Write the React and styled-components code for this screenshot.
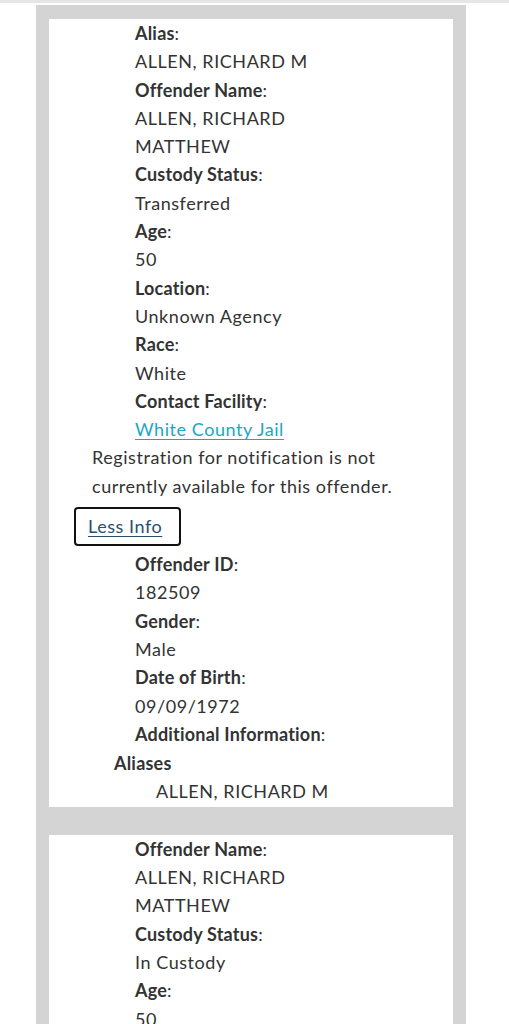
import React from 'react';
import styled, { createGlobalStyle } from 'styled-components';

const GlobalStyle = createGlobalStyle`
    html, body {
        margin: 0;
        padding: 0;
        background: #ffffff;
    }
    body {
        font-family: "Lato", "Open Sans", sans-serif;
        color: #333333;
    }
`

const TopRule = styled.div`
    height: 3px;
    background-color: #e6e6e6;
    margin-bottom: 2px;
`

const Results = styled.div`
    margin-left: 36px;
    width: 430px;
    background-color: #d4d4d4;
    box-sizing: border-box;
    padding: 14px 13px 0;
    display: flex;
    flex-direction: column;
    gap: 28px;
`

const Card = styled.div`
    background-color: #ffffff;
    padding-bottom: ${props => props.$bottom || 0}px;
    font-size: 18px;
    line-height: 28.3px;
    letter-spacing: 0.55px;
`

const Field = styled.div`
    padding-left: 86px;
`

const Label = styled.div`
    b {
        font-weight: 700;
        letter-spacing: 0.2px;
    }
`

const Value = styled.div``

const FacilityLink = styled.a`
    color: #1aa7c2;
    text-decoration: underline;
    text-underline-offset: 3px;
`

const Notice = styled.p`
    margin: 0;
    padding-left: 43px;
    padding-right: 20px;
`

const LessInfo = styled.div`
    margin: 7px 0 4px 25px;
    width: 107px;
    height: 39px;
    box-sizing: border-box;
    border: 2.5px solid #111111;
    border-radius: 4px;
    display: flex;
    align-items: center;
    padding-left: 12px;

    a {
        color: #2b4f6e;
        text-decoration: underline;
        text-underline-offset: 3px;
    }
`

const AliasHeading = styled.div`
    padding-left: 65px;
    font-weight: 700;
    letter-spacing: 0.2px;
    margin-top: 1px;
`

const AliasValue = styled.div`
    padding-left: 107px;
`

function InfoField({ label, children }) {
    return (
        <Field>
            <Label><b>{label}</b>:</Label>
            {children && <Value>{children}</Value>}
        </Field>
    )
}

export default function App() {
    return (
        <>
            <GlobalStyle />
            <TopRule />
            <Results>
                <Card $bottom={1}>
                    <InfoField label="Alias">ALLEN, RICHARD M</InfoField>
                    <InfoField label="Offender Name">ALLEN, RICHARD<br />MATTHEW</InfoField>
                    <InfoField label="Custody Status">Transferred</InfoField>
                    <InfoField label="Age">50</InfoField>
                    <InfoField label="Location">Unknown Agency</InfoField>
                    <InfoField label="Race">White</InfoField>
                    <InfoField label="Contact Facility">
                        <FacilityLink href="#">White County Jail</FacilityLink>
                    </InfoField>
                    <Notice>Registration for notification is not currently available for this offender.</Notice>
                    <LessInfo><a href="#">Less Info</a></LessInfo>
                    <InfoField label="Offender ID">182509</InfoField>
                    <InfoField label="Gender">Male</InfoField>
                    <InfoField label="Date of Birth">09/09/1972</InfoField>
                    <InfoField label="Additional Information" />
                    <AliasHeading>Aliases</AliasHeading>
                    <AliasValue>ALLEN, RICHARD M</AliasValue>
                </Card>
                <Card>
                    <InfoField label="Offender Name">ALLEN, RICHARD<br />MATTHEW</InfoField>
                    <InfoField label="Custody Status">In Custody</InfoField>
                    <InfoField label="Age">50</InfoField>
                </Card>
            </Results>
        </>
    )
}
